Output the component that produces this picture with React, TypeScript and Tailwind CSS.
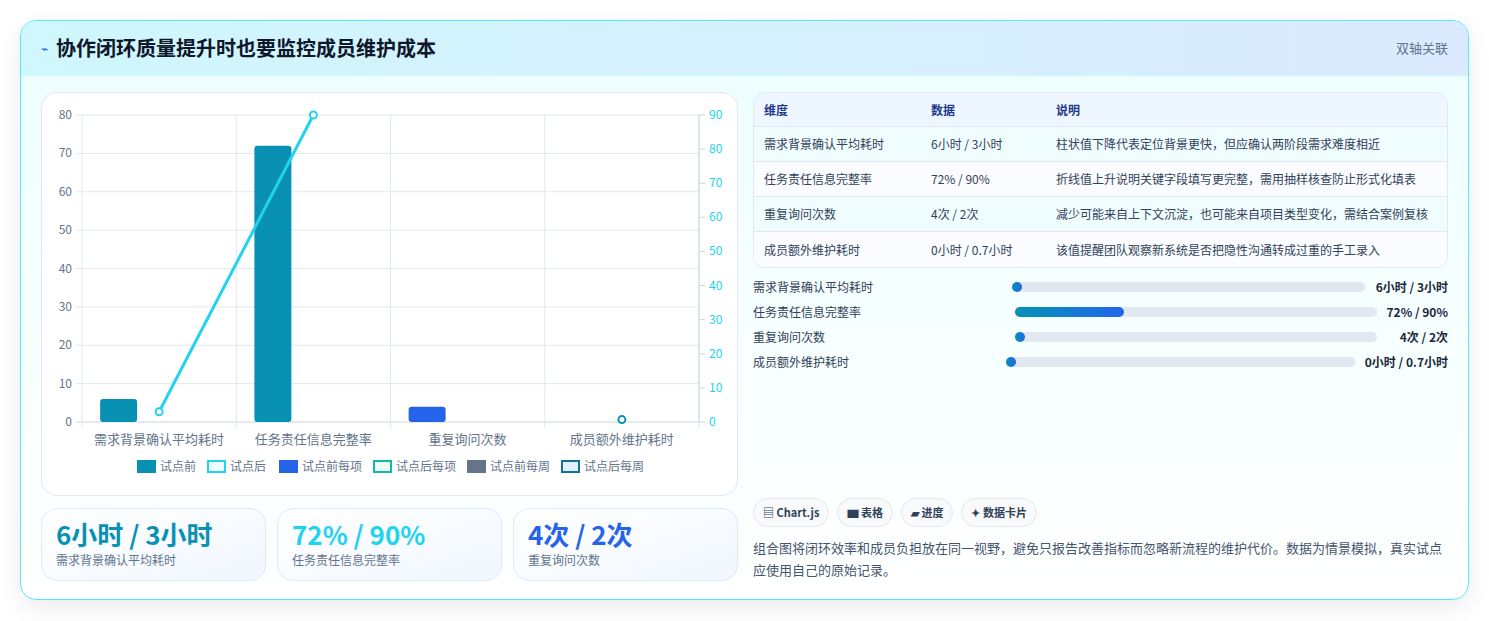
import React from "react";

const F = { fontFamily: '"Noto Sans CJK SC", "Noto Sans", sans-serif' };

const cats = ["需求背景确认平均耗时", "任务责任信息完整率", "重复询问次数", "成员额外维护耗时"];

function Chart() {
  const x0 = 40, x1 = 657, yTop = 22, yBot = 329;
  const h = yBot - yTop;
  const cw = (x1 - x0) / 4;
  const yl = (v: number) => yBot - (v / 80) * h;
  const yr = (v: number) => yBot - (v / 90) * h;
  const bars = [
    { i: 0, v: 6, c: "#0891b2" },
    { i: 1, v: 72, c: "#0891b2" },
    { i: 2, v: 4, c: "#2563eb" },
  ];
  const legend = [
    { t: "试点前", fill: "#0891b2", stroke: "#0891b2" },
    { t: "试点后", fill: "#ecfeff", stroke: "#22d3ee" },
    { t: "试点前每项", fill: "#2563eb", stroke: "#2563eb" },
    { t: "试点后每项", fill: "#ecfdf5", stroke: "#14b8a6" },
    { t: "试点前每周", fill: "#64748b", stroke: "#64748b" },
    { t: "试点后每周", fill: "#e0f2fe", stroke: "#0e7490" },
  ];
  const lw = [70, 72, 94, 94, 94, 90];
  let lx = 95;
  return (
    <svg width="697" height="380" style={F}>
      {[0, 10, 20, 30, 40, 50, 60, 70, 80].map((v) => (
        <g key={v}>
          <line x1={x0 - 6} x2={x1} y1={yl(v)} y2={yl(v)} stroke={v === 0 ? "#cbd5e1" : "#e2e8f0"} />
          <text x={x0 - 10} y={yl(v) + 4} textAnchor="end" fontSize="12" fill="#64748b">{v}</text>
        </g>
      ))}
      {[0, 10, 20, 30, 40, 50, 60, 70, 80, 90].map((v) => (
        <g key={v}>
          <line x1={x1} x2={x1 + 6} y1={yr(v)} y2={yr(v)} stroke="#cbd5e1" />
          <text x={x1 + 10} y={yr(v) + 4} fontSize="12" fill="#22d3ee">{v}</text>
        </g>
      ))}
      {[0, 1, 2, 3, 4].map((i) => (
        <line key={i} x1={x0 + i * cw} x2={x0 + i * cw} y1={yTop} y2={yBot + 6} stroke="#e2e8f0" />
      ))}
      <line x1={x1} x2={x1} y1={yTop} y2={yBot} stroke="#cbd5e1" />
      {bars.map((b) => {
        const cx = x0 + b.i * cw + cw / 2 - 41;
        return <rect key={b.i} x={cx - 18} y={yl(b.v)} width="37" height={yBot - yl(b.v)} rx="3" fill={b.c} />;
      })}
      <line x1={x0 + cw / 2} x2={x0 + cw * 1.5} y1={yr(3)} y2={yr(90)} stroke="#22d3ee" strokeWidth="3" />
      <circle cx={x0 + cw / 2} cy={yr(3)} r="3.5" fill="#fff" stroke="#22d3ee" strokeWidth="2" />
      <circle cx={x0 + cw * 1.5} cy={yr(90)} r="3.5" fill="#fff" stroke="#22d3ee" strokeWidth="2" />
      <circle cx={x0 + cw * 3.5} cy={yr(0.7)} r="3.5" fill="#fff" stroke="#0891b2" strokeWidth="2" />
      {cats.map((c, i) => (
        <text key={c} x={x0 + i * cw + cw / 2} y="351" textAnchor="middle" fontSize="13" fill="#64748b">{c}</text>
      ))}
      {legend.map((l, i) => {
        const x = lx;
        lx += lw[i];
        return (
          <g key={l.t}>
            <rect x={x + 1} y="368" width="17" height="11" fill={l.fill} stroke={l.stroke} strokeWidth="2" />
            <text x={x + 23} y="378" fontSize="12" fill="#64748b">{l.t}</text>
          </g>
        );
      })}
    </svg>
  );
}

const rows = [
  ["需求背景确认平均耗时", "6小时 / 3小时", "柱状值下降代表定位背景更快，但应确认两阶段需求难度相近"],
  ["任务责任信息完整率", "72% / 90%", "折线值上升说明关键字段填写更完整，需用抽样核查防止形式化填表"],
  ["重复询问次数", "4次 / 2次", "减少可能来自上下文沉淀，也可能来自项目类型变化，需结合案例复核"],
  ["成员额外维护耗时", "0小时 / 0.7小时", "该值提醒团队观察新系统是否把隐性沟通转成过重的手工录入"],
];

const prog = [
  { l: "需求背景确认平均耗时", v: "6小时 / 3小时", p: 0, lw: 259, vw: 83 },
  { l: "任务责任信息完整率", v: "72% / 90%", p: 30, lw: 262, vw: 71 },
  { l: "重复询问次数", v: "4次 / 2次", p: 0, lw: 262, vw: 71 },
  { l: "成员额外维护耗时", v: "0小时 / 0.7小时", p: 0, lw: 253, vw: 93 },
];

export default function App() {
  return (
    <div className="min-h-screen bg-white pt-5 px-5" style={F}>
      <div className="rounded-2xl border border-cyan-300 overflow-hidden shadow-[0_8px_24px_rgba(0,0,0,0.08)] bg-gradient-to-b from-[#ecfeff] to-white">
        <div className="h-[55px] flex items-center justify-between px-5 bg-gradient-to-r from-[#cff7fd] to-[#dbeafe] border-b border-cyan-100">
          <div className="flex items-center gap-2">
            <span className="text-blue-600 text-xs">⌁</span>
            <span className="text-[20px] font-bold text-[#0f172a]">协作闭环质量提升时也要监控成员维护成本</span>
          </div>
          <span className="text-[13px] text-slate-500">双轴关联</span>
        </div>
        <div className="flex gap-[15px] px-5 pt-4 pb-[18px]">
          <div className="w-[697px] flex flex-col gap-3">
            <div className="h-[404px] bg-white rounded-2xl border border-slate-200 pt-0">
              <Chart />
            </div>
            <div className="grid grid-cols-3 gap-[11px]">
              {[
                ["6小时 / 3小时", "需求背景确认平均耗时", "text-[#0891b2]"],
                ["72% / 90%", "任务责任信息完整率", "text-[#22d3ee]"],
                ["4次 / 2次", "重复询问次数", "text-[#2563eb]"],
              ].map(([a, b, c]) => (
                <div key={b} className="h-[73px] rounded-2xl border border-blue-100 bg-gradient-to-br from-white to-[#f1f7ff] px-[14px] pt-[9px]">
                  <div className={`text-[26px] font-bold leading-[32px] ${c}`}>{a}</div>
                  <div className="text-[12px] text-slate-500 mt-[1px]">{b}</div>
                </div>
              ))}
            </div>
          </div>
          <div className="w-[697px] flex flex-col justify-between">
            <div>
              <div className="rounded-xl border border-slate-200 overflow-hidden bg-white text-[12px]">
                <div className="grid grid-cols-[167px_125px_1fr] h-[34px] items-center px-[10px] bg-[#eef6ff] text-[#1e3a8a] font-bold border-b border-slate-200">
                  <span>维度</span><span>数据</span><span>说明</span>
                </div>
                {rows.map((r, i) => (
                  <div key={i} className={`grid grid-cols-[167px_125px_1fr] h-[35px] items-center px-[10px] text-slate-700 ${i < 3 ? "border-b border-slate-200" : ""} ${i % 2 === 0 ? "bg-[#f0fdff]" : "bg-[#fafcff]"}`}>
                    <span>{r[0]}</span><span>{r[1]}</span><span>{r[2]}</span>
                  </div>
                ))}
              </div>
              <div className="mt-[9px] flex flex-col gap-[6px]">
                {prog.map((p) => (
                  <div key={p.l} className="flex items-center h-[19px] text-[12px]">
                    <span className="text-slate-700" style={{ width: p.lw }}>{p.l}</span>
                    <div className="flex-1 h-[10px] rounded-full bg-slate-200 relative">
                      <div className="h-full rounded-full bg-gradient-to-r from-[#0891b2] to-[#2563eb]" style={{ width: p.p ? `${p.p}%` : 10 }} />
                    </div>
                    <span className="text-right font-bold text-slate-800" style={{ width: p.vw }}>{p.v}</span>
                  </div>
                ))}
              </div>
            </div>
            <div>
              <div className="flex gap-2 text-[11px] font-bold text-slate-700">
                {["▤ Chart.js", "▆ 表格", "▰ 进度", "✦ 数据卡片"].map((t) => (
                  <span key={t} className="h-[29px] flex items-center px-[9px] rounded-full border border-slate-200 bg-slate-50">{t}</span>
                ))}
              </div>
              <p className="mt-[10px] text-[13px] leading-[22px] text-slate-600">
                组合图将闭环效率和成员负担放在同一视野，避免只报告改善指标而忽略新流程的维护代价。数据为情景模拟，真实试点应使用自己的原始记录。
              </p>
            </div>
          </div>
        </div>
      </div>
    </div>
  );
}
